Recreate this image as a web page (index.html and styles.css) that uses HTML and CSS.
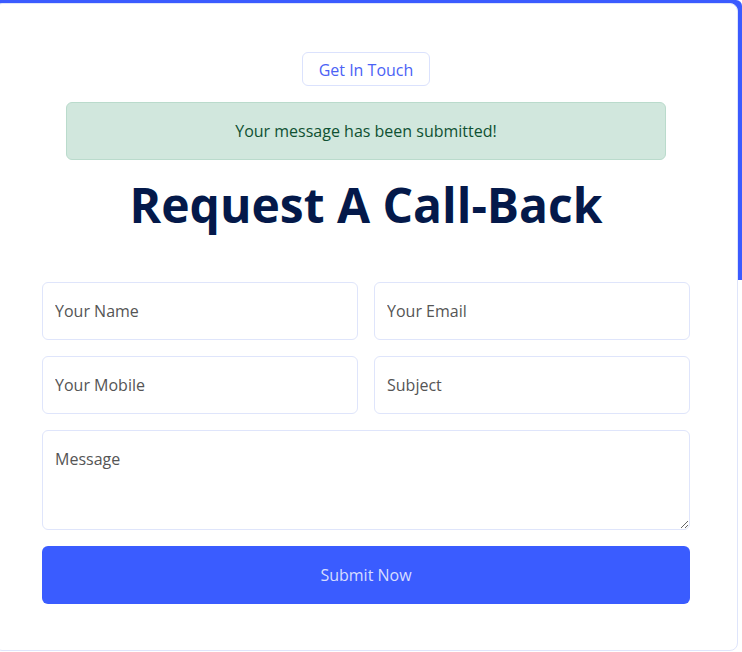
FILE: index.html
```html
<!DOCTYPE html>
<html lang="en">
<head>
<meta charset="utf-8">
<title>Request A Call-Back</title>
<link rel="stylesheet" href="styles.css">
</head>
<body>
<div class="frame">
  <div class="card">
    <div class="tag-row"><span class="tag">Get In Touch</span></div>
    <div class="alert">Your message has been submitted!</div>
    <h1 class="title">Request A Call-Back</h1>
    <form class="form">
      <div class="grid">
        <input class="field" type="text" placeholder="Your Name">
        <input class="field" type="email" placeholder="Your Email">
        <input class="field" type="text" placeholder="Your Mobile">
        <input class="field" type="text" placeholder="Subject">
      </div>
      <textarea class="field area" placeholder="Message"></textarea>
      <button class="submit" type="button">Submit Now</button>
    </form>
  </div>
</div>
</body>
</html>
```
FILE: styles.css
```css
html, body {
  margin: 0;
  padding: 0;
  background: #ffffff;
  font-family: "Open Sans", "Noto Sans", sans-serif;
}
.frame {
  position: relative;
  padding-top: 3px;
  padding-right: 4px;
  height: 652px;
  box-sizing: border-box;
  overflow: hidden;
}
.frame::before {
  content: "";
  position: absolute;
  top: 0;
  right: 0;
  width: 100%;
  height: 280px;
  background: #3b5bff;
  border-radius: 0 6px 0 0;
}
.card {
  position: relative;
  margin-left: -6px;
  height: 648px;
  box-sizing: border-box;
  background: #ffffff;
  border: 1px solid #dfe5fb;
  border-radius: 8px;
  padding: 48px 47px 0 47px;
}
.tag-row {
  display: flex;
  justify-content: center;
}
.tag {
  display: inline-block;
  height: 34px;
  box-sizing: border-box;
  padding: 1px 16px 0 16px;
  border: 1px solid #dbe2fd;
  border-radius: 6px;
  color: #4b62f5;
  font-size: 16px;
  line-height: 32px;
}
.alert {
  margin: 16px 24px 0 24px;
  padding: 16px;
  background: #d1e7dd;
  border: 1px solid #badbcc;
  border-radius: 6px;
  color: #0f5132;
  font-size: 16px;
  line-height: 24px;
  text-align: center;
}
.title {
  margin: 16px 0 0 0;
  text-align: center;
  font-size: 48px;
  line-height: 58px;
  font-weight: 700;
  color: #04194a;
}
.form {
  margin-top: 48px;
  display: flex;
  flex-direction: column;
  gap: 16px;
}
.grid {
  display: grid;
  grid-template-columns: 1fr 1fr;
  gap: 16px;
}
.field {
  display: block;
  width: 100%;
  height: 58px;
  box-sizing: border-box;
  border: 1px solid #dfe5fb;
  border-radius: 6px;
  padding: 0 12px;
  font-family: "Open Sans", "Noto Sans", sans-serif;
  font-size: 16px;
  color: #333;
  background: #fff;
  outline: none;
}
.field::placeholder {
  color: #555;
  opacity: 1;
}
.area {
  height: 100px;
  padding: 16px 12px;
  line-height: 24px;
  resize: vertical;
}
.submit {
  display: block;
  width: 100%;
  height: 58px;
  border: none;
  border-radius: 6px;
  background: #3a5cff;
  color: #d6dcff;
  font-family: "Open Sans", "Noto Sans", sans-serif;
  font-size: 16px;
  cursor: pointer;
}
```
